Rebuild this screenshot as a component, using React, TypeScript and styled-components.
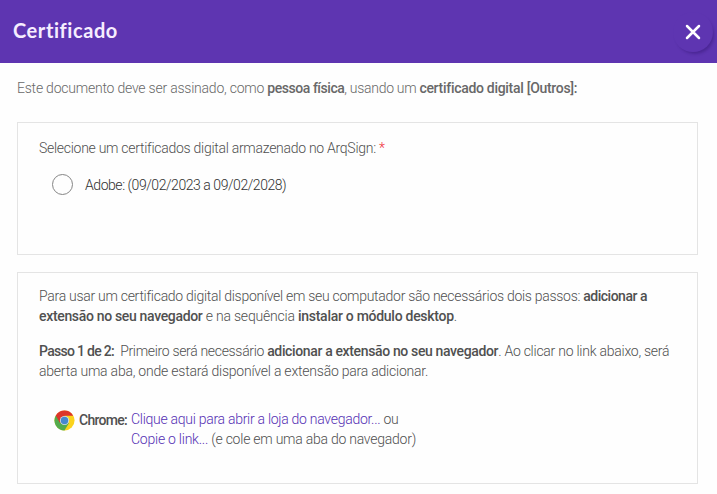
import React from 'react';
import styled, { createGlobalStyle } from 'styled-components';

const GlobalStyle = createGlobalStyle`
  *, *::before, *::after { box-sizing: border-box; }
  body {
    margin: 0;
    background: #fefefe;
    font-family: Roboto, 'Open Sans', sans-serif;
    font-size: 14px;
    font-weight: 300;
    color: #505050;
  }
`;

const Dialog = styled.main`
  display: flex;
  flex-direction: column;
  height: 494px;
  overflow: hidden;
`;

const Header = styled.header`
  display: flex;
  flex: none;
  align-items: center;
  justify-content: space-between;
  height: 63px;
  padding: 0 4px 0 13px;
  overflow: hidden;
  background: #5e35b1;
`;

const Title = styled.h1`
  margin: 0 0 3px;
  font: 700 20px/26px Lato, sans-serif;
  letter-spacing: 0.58px;
  color: #f6edff;
`;

const CloseButton = styled.button`
  display: flex;
  align-items: center;
  justify-content: center;
  width: 40px;
  height: 40px;
  padding: 0;
  border: 0;
  border-radius: 50%;
  background: #5e35b1;
  box-shadow: 2px 3px 3px -1px rgba(35, 10, 90, 0.32);
`;

const Content = styled.div`
  display: flex;
  flex-direction: column;
  padding: 15px 19px 0 17px;
`;

const Line = styled.p<{ $tone?: string; $height?: number }>`
  margin: 0;
  line-height: ${({ $height = 20 }) => $height}px;
  white-space: pre;
  color: ${({ $tone = 'inherit' }) => $tone};
`;

const Text = styled.span<{ $track?: number }>`
  letter-spacing: ${({ $track = -0.26 }) => $track}px;
`;

const Strong = styled.strong<{ $track?: number }>`
  font-weight: 500;
  letter-spacing: ${({ $track = -0.33 }) => $track}px;
`;

const Link = styled.a<{ $track?: number }>`
  color: #5530b4;
  text-decoration: none;
  letter-spacing: ${({ $track = -0.3 }) => $track}px;
`;

const Required = styled.span`
  color: #f02c38;
`;

const Card = styled.section<{ $height: number; $gap: number; $top: number }>`
  height: ${({ $height }) => $height}px;
  margin-top: ${({ $gap }) => $gap}px;
  padding: ${({ $top }) => $top}px 21px 0;
  border: 1px solid #e4e4e4;
`;

const Option = styled.label`
  display: flex;
  align-items: center;
  gap: 12px;
  margin: 16px 0 0 13px;
  color: #303030;
`;

const Radio = styled.input`
  appearance: none;
  width: 21px;
  height: 21px;
  margin: 0;
  border: 1.5px solid #858585;
  border-radius: 50%;
`;

const Paragraph = styled.div`
  & + & { margin-top: 14px; }
`;

const Browser = styled.div`
  display: flex;
  align-items: flex-start;
  margin: 29px 0 0 15px;
`;

const BrowserName = styled.div`
  width: 52px;
  margin-left: 4px;
`;

const ChromeIcon = () => (
  <svg width="21" height="21" viewBox="0 0 48 48" aria-hidden="true">
    <circle cx="24" cy="24" r="23" fill="#fbd31c" />
    <path d="M24 24 4.1 12.5A23 23 0 0 0 24 47L34 30Z" fill="#54ab4c" />
    <path d="M4.1 12.5A23 23 0 0 1 44 13H24L14 30Z" fill="#dc352b" />
    <circle cx="24" cy="24" r="10.5" fill="#d3dfe6" />
    <circle cx="24" cy="24" r="8.5" fill="#4588cf" />
  </svg>
);

const CloseIcon = () => (
  <svg width="16" height="16" viewBox="0 0 16 16" aria-hidden="true">
    <path d="M2 2 14 14M14 2 2 14" stroke="#fff" strokeWidth="2.5" strokeLinecap="round" />
  </svg>
);

export default function App() {
  return (
    <Dialog>
      <GlobalStyle />
      <Header>
        <Title>Certificado</Title>
        <CloseButton aria-label="Fechar"><CloseIcon /></CloseButton>
      </Header>
      <Content>
        <Line $tone="#686868">
          <Text $track={-0.22}>Este documento deve ser assinado, como </Text>
          <Strong $track={-0.46}>pessoa física</Strong>
          <Text $track={-0.3}>, usando um </Text>
          <Strong $track={-0.3}>certificado digital [Outros]:</Strong>
        </Line>
        <Card $height={133} $gap={24} $top={15}>
          <Line>
            <Text $track={-0.28}>Selecione um certificados digital armazenado no ArqSign: </Text>
            <Required>*</Required>
          </Line>
          <Option>
            <Radio type="radio" name="certificado" />
            <Text $track={-0.45}>Adobe: (09/02/2023 a 09/02/2028)</Text>
          </Option>
        </Card>
        <Card $height={212} $gap={17} $top={13}>
          <Paragraph>
            <Line>
              <Text $track={-0.28}>Para usar um certificado digital disponível em seu computador são necessários dois passos: </Text>
              <Strong $track={-0.5}>adicionar a</Strong>
            </Line>
            <Line $height={21}>
              <Strong>extensão no seu navegador</Strong>
              <Text $track={-0.2}> e na sequência </Text>
              <Strong $track={-0.28}>instalar o módulo desktop</Strong>
              <Text>.</Text>
            </Line>
          </Paragraph>
          <Paragraph>
            <Line>
              <Strong $track={-0.71}>Passo 1 de 2:</Strong>
              <Text $track={-0.32}>  Primeiro será necessário </Text>
              <Strong $track={-0.36}>adicionar a extensão no seu navegador</Strong>
              <Text $track={-0.25}>. Ao clicar no link abaixo, será</Text>
            </Line>
            <Line>
              <Text $track={-0.22}>aberta uma aba, onde estará disponível a extensão para adicionar.</Text>
            </Line>
          </Paragraph>
          <Browser>
            <ChromeIcon />
            <BrowserName>
              <Line><Strong $track={-0.72}>Chrome:</Strong></Line>
            </BrowserName>
            <div>
              <Line $height={19}>
                <Link $track={-0.28}>Clique aqui para abrir a loja do navegador...</Link>
                <Text> ou</Text>
              </Line>
              <Line>
                <Link $track={-0.24}>Copie o link...</Link>
                <Text $track={-0.24}> (e cole em uma aba do navegador)</Text>
              </Line>
            </div>
          </Browser>
        </Card>
      </Content>
    </Dialog>
  );
}
